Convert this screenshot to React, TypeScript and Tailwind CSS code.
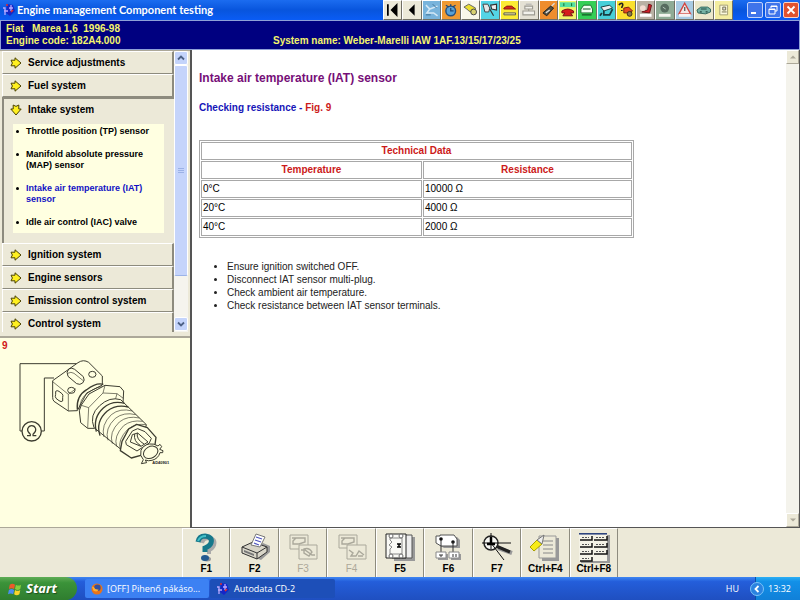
import type { ReactNode } from "react";
import clsx from "clsx";

const Arrow = ({ down = false }: { down?: boolean }) => (
  <svg viewBox="0 0 12 12" className={clsx("size-3 shrink-0", down && "rotate-90")}>
    <path d="M1 3.2H5V0.8L11 6L5 11.2V8.8H1L2.4 6Z" fill="#fff020" stroke="#4a4200" strokeWidth="1" />
  </svg>
);

const AppLogo = () => (
  <svg viewBox="0 0 14 14" className="size-3.5 shrink-0">
    <path d="M5 1L11 2L13 8L8 13L4 10Z" fill="#1526c8" />
    <path d="M1 5H3V12M2 8H6M9 2V8M7 5H11" stroke="#b9a8ff" strokeWidth="1.3" fill="none" />
    <path d="M9 9L11 7M4 2H6" stroke="#e03030" strokeWidth="1.6" />
  </svg>
);

const quickButtons: { label: string; bg: string; icon: ReactNode }[] = [
  { label: "First", bg: "bg-[#ece9d8]", icon: <path d="M4 3V15M13 4L8 9L13 14Z" fill="#000" stroke="#000" strokeWidth="1.8" /> },
  { label: "Previous", bg: "bg-[#ece9d8]", icon: <path d="M12 3V15L6 9Z" fill="#000" /> },
  {
    label: "Tools",
    bg: "bg-[#79b4dc]",
    icon: (
      <>
        <path d="M3 4L7 8L15 5M7 8L4 12H11L15 15" stroke="#d4e8f6" strokeWidth="1.6" fill="none" />
        <path d="M10 3L14 7M3 14H8" stroke="#3d7197" strokeWidth="1" />
      </>
    ),
  },
  {
    label: "Service times",
    bg: "bg-[#f09a32]",
    icon: (
      <>
        <circle cx="9" cy="10" r="5" fill="#59a1d5" stroke="#24507f" strokeWidth="1.5" />
        <path d="M4 4L7 6M14 4L11 6M9 3V5M9 7V10H12" stroke="#1d4777" strokeWidth="1.3" fill="none" />
      </>
    ),
  },
  {
    label: "Timing belts",
    bg: "bg-[#f8f6e8]",
    icon: (
      <>
        <path d="M2 6L7 3L14 7L12 12L7 10L5 8Z" fill="#eadf2f" stroke="#666" />
        <circle cx="12" cy="11" r="3" fill="#d8d070" stroke="#444" />
      </>
    ),
  },
  {
    label: "Diagnostics",
    bg: "bg-[#54d4e6]",
    icon: (
      <>
        <path d="M2 3H7L9 7L8 11H4Z" fill="#e6e6e6" stroke="#444" />
        <path d="M10 4L16 3V9L11 8ZM9 8L13 15" fill="#eee" stroke="#333" strokeWidth="1.2" />
      </>
    ),
  },
  {
    label: "Wheel alignment",
    bg: "bg-[#fcec35]",
    icon: (
      <>
        <path d="M3 7L6 5H11L15 8H3Z" fill="#d62b1d" stroke="#8e1c12" />
        <path d="M3 12H15V14H3Z" fill="#fff8a0" stroke="#555" />
      </>
    ),
  },
  {
    label: "Tyres",
    bg: "bg-[#e4e1d4]",
    icon: (
      <>
        <path d="M5 5H13V8H5ZM3 10H15V14H3ZM9 8V10" fill="#f2f1eb" stroke="#9b9990" strokeWidth="1.1" />
        <path d="M6 3H12" stroke="#aaa" />
      </>
    ),
  },
  {
    label: "Key programming",
    bg: "bg-[#ef8d2d]",
    icon: (
      <>
        <path d="M3 12L11 5L14 7L7 15Z" fill="#545043" stroke="#222" />
        <path d="M12 5L15 2M6 12L10 9" stroke="#ddd" strokeWidth="1.4" />
      </>
    ),
  },
  {
    label: "Service indicator",
    bg: "bg-[#f1f56a]",
    icon: (
      <>
        <path d="M1 1H17V6H1Z" fill="#55e0a0" />
        <path d="M5 5V2M13 5V2" stroke="#136a29" />
        <path d="M3 10Q9 6 15 10V12H12L14 15H4L6 12H3Z" fill="#d61d1d" stroke="#7b1111" />
      </>
    ),
  },
  {
    label: "Air conditioning",
    bg: "bg-[#35cf56]",
    icon: (
      <>
        <path d="M3 8L6 4H13L15 8V12H3Z" fill="#f3fff2" stroke="#1c7030" />
        <path d="M5 8H13M4 14H14" stroke="#145724" strokeWidth="1.2" />
      </>
    ),
  },
  {
    label: "Electrical",
    bg: "bg-[#47cfd8]",
    icon: (
      <>
        <path d="M3 6L12 4L15 7L6 10Z" fill="#efefef" stroke="#173c40" />
        <path d="M6 10V14H12L15 8M4 12L2 15" stroke="#173c40" strokeWidth="1.8" fill="none" />
      </>
    ),
  },
  {
    label: "Fault finding",
    bg: "bg-[#fae02e]",
    icon: (
      <>
        <path d="M2 4Q3 2 5 2Q7 3 5 6V7M5 9V10" stroke="#222" strokeWidth="1.6" fill="none" />
        <path d="M7 7L12 6L16 10L13 12H7Z" fill="#e34b22" stroke="#7c210f" />
        <circle cx="13" cy="13" r="2.5" fill="#8a7752" stroke="#3c3018" />
      </>
    ),
  },
  {
    label: "Airbags",
    bg: "bg-[#b9b1a4]",
    icon: (
      <>
        <path d="M5 11L11 9L12 3L15 4L13 12Z" fill="#cf1f27" stroke="#6d1519" />
        <circle cx="6" cy="7" r="3" fill="#f3dcd2" />
        <path d="M3 13H15V16H3Z" fill="#fff" />
      </>
    ),
  },
  {
    label: "ABS",
    bg: "bg-[#8fab95]",
    icon: (
      <>
        <circle cx="9" cy="7" r="4.5" fill="#566b5e" />
        <path d="M7 6L10 8" stroke="#b7c9bd" />
        <path d="M3 13H15V16H3Z" fill="#f4f4ee" />
      </>
    ),
  },
  {
    label: "Warnings",
    bg: "bg-[#a9cbe3]",
    icon: (
      <>
        <path d="M9 2L15 13H3Z" fill="#f4e8e7" stroke="#d2453f" strokeWidth="1.4" />
        <path d="M9 6V10" stroke="#555" strokeWidth="1.3" />
        <path d="M3 13H15V16H3Z" fill="#f6f3f3" />
      </>
    ),
  },
  {
    label: "Vehicle",
    bg: "bg-[#ece8cb]",
    icon: (
      <>
        <path d="M2 9L6 6H13L16 8V11L11 13L3 12Z" fill="#76b3a6" stroke="#356960" />
        <path d="M6 8H12M5 11H7M11 11H13" stroke="#244b44" strokeWidth="1.2" />
      </>
    ),
  },
  {
    label: "Components",
    bg: "bg-[#f4eda0]",
    icon: (
      <>
        <path d="M5 4H13V14H5Z" fill="#fbf9dd" stroke="#a59f76" />
        <path d="M8 6H11V9H8ZM7 11H12" fill="#ddd" stroke="#77724e" />
      </>
    ),
  },
];

const functionKeys: { label: string; disabled?: boolean; icon: ReactNode }[] = [
  {
    label: "F1",
    icon: (
      <>
        <path d="M11 9Q12 4 18 4Q25 5 23 11Q22 14 18 16V20" fill="none" stroke="#aaa" strokeWidth="4" transform="translate(1 1)" />
        <path d="M8 9Q9 3 15 3Q23 4 21 10Q20 13 15 15V19" fill="none" stroke="#16788b" strokeWidth="5" />
        <path d="M8 8Q10 3 16 3" fill="none" stroke="#43c1c9" strokeWidth="2" />
        <ellipse cx="17" cy="26" rx="4" ry="2.5" fill="#999" />
        <ellipse cx="15" cy="25" rx="4" ry="3" fill="#245a91" />
      </>
    ),
  },
  {
    label: "F2",
    icon: (
      <>
        <path d="M7 21L22 27L31 19V13L24 10Z" fill="#999" />
        <path d="M3 14L14 9L28 14V19L18 26L3 20Z" fill="#d8d5c8" stroke="#333" />
        <path d="M3 14L18 20V26M18 20L28 14" stroke="#333" fill="none" />
        <path d="M5 19L15 23V21L5 17Z" fill="#777" />
        <path d="M12 12L17 1L26 4L21 14Z" fill="#fff" stroke="#777" />
        <path d="M17 4L23 6M16 7L22 9M15 10L20 12" stroke="#4d53be" strokeWidth="1.3" />
      </>
    ),
  },
  {
    label: "F3",
    disabled: true,
    icon: (
      <>
        <path d="M3 2H21V16H3Z" fill="#ece9d8" stroke="#aaa89b" />
        <path d="M6 8L9 5H18V9L12 11H6ZM5 5H9" fill="none" stroke="#aaa89b" strokeWidth="1.4" />
        <path d="M12 12H30V26H12Z" fill="#ece9d8" stroke="#aaa89b" />
        <path d="M14 17H18L25 22H28M17 16Q22 14 25 19L22 23L17 20Z" fill="none" stroke="#aaa89b" strokeWidth="1.4" />
      </>
    ),
  },
  {
    label: "F4",
    disabled: true,
    icon: (
      <>
        <path d="M3 2H21V15H3Z" fill="#ece9d8" stroke="#aaa89b" />
        <path d="M6 8L9 5H18V9L12 11H6ZM5 5H9" fill="none" stroke="#aaa89b" strokeWidth="1.4" />
        <path d="M11 12H30V26H11Z" fill="#ece9d8" stroke="#aaa89b" />
        <path d="M13 17L17 20L15 23H20L23 18L28 22M22 23H27" fill="none" stroke="#aaa89b" strokeWidth="1.4" />
      </>
    ),
  },
  {
    label: "F5",
    icon: (
      <>
        <path d="M10 4H31V28H10Z" fill="#999" />
        <path d="M8 2H28V25H8Z" fill="#eee" stroke="#555" />
        <path d="M2 1H22V25H2Z" fill="#f9f9f5" stroke="#222" />
        <path d="M6 5H18V21H6V16L8 14L5 12L8 9L6 7Z" fill="none" stroke="#888" />
        <circle cx="7" cy="3" r="2" fill="#fff" stroke="#666" />
        <circle cx="17" cy="3" r="2" fill="#fff" stroke="#666" />
        <circle cx="7" cy="23" r="2" fill="#fff" stroke="#666" />
        <circle cx="17" cy="23" r="2" fill="#fff" stroke="#666" />
        <path d="M13 11H17M15 11V14M13 14H17" stroke="#000" strokeWidth="1.5" />
      </>
    ),
  },
  {
    label: "F6",
    icon: (
      <>
        <path d="M7 4H25L28 7V15H12L7 12Z" fill="#999" />
        <path d="M4 3H8V2H22L25 6V13H9L4 10Z" fill="#fff" stroke="#555" />
        <circle cx="9" cy="6" r="1.8" fill="#111" />
        <circle cx="21" cy="9" r="1.8" fill="#111" />
        <path d="M9 7V19M21 9V19" stroke="#333" />
        <path d="M6 21H16V27H6ZM19 21H29V27H19Z" fill="#999" />
        <path d="M4 19H14V25H4ZM17 19H27V25H17Z" fill="#fff" stroke="#888" />
        <path d="M8 21V23H10V21M21 21V24M24 21V24" fill="none" stroke="#333" />
      </>
    ),
  },
  {
    label: "F7",
    icon: (
      <>
        <path d="M17 15L31 20" stroke="#999" strokeWidth="4" />
        <path d="M15 13L29 19" stroke="#222" strokeWidth="3" />
        <circle cx="10" cy="10" r="7" fill="#f8f8f4" stroke="#222" strokeWidth="1.5" />
        <path d="M10 0V16M1 10H30M10 10L23 27" stroke="#111" strokeWidth="1" />
        <path d="M10 4V12M6 11H14" stroke="#000" strokeWidth="2.5" />
      </>
    ),
  },
  {
    label: "Ctrl+F4",
    icon: (
      <>
        <path d="M13 5H30V28H13Z" fill="#999" />
        <path d="M10 3H27V25H10Z" fill="#ece9d8" stroke="#999" />
        <path d="M14 8H24M14 12H24M14 16H24M14 20H24" stroke="#888" />
        <path d="M1 14L8 7L13 11L5 18Z" fill="#f7ec19" stroke="#aaa000" />
        <path d="M8 7L15 2L13 11Z" fill="#eee" stroke="#777" />
      </>
    ),
  },
  {
    label: "Ctrl+F8",
    icon: (
      <>
        <path d="M28 2H32V30H3V28H28Z" fill="#999" />
        <path d="M1 0H29V28H1Z" fill="#f4f2e6" />
        <path d="M1 0.8H29" stroke="#223a78" strokeWidth="1.5" />
        <path d="M2 7H14V3M16 7H29V3M2 14H14V10M16 14H29V10M2 21H14V17M16 21H29V17M2 28H14V24" fill="none" stroke="#111" strokeWidth="1.5" />
        <path d="M4 4.5H11M18 4.5H26M4 11.5H11M18 11.5H26M4 18.5H11M18 18.5H26M4 25.5H11" stroke="#555" strokeDasharray="2 1" />
      </>
    ),
  },
];

const intakeItems = [
  { text: "Throttle position (TP) sensor" },
  { text: "Manifold absolute pressure (MAP) sensor" },
  { text: "Intake air temperature (IAT) sensor", active: true },
  { text: "Idle air control (IAC) valve" },
];

const readings = [
  ["0°C", "10000 Ω"],
  ["20°C", "4000 Ω"],
  ["40°C", "2000 Ω"],
];

const steps = [
  "Ensure ignition switched OFF.",
  "Disconnect IAT sensor multi-plug.",
  "Check ambient air temperature.",
  "Check resistance between IAT sensor terminals.",
];

const TitleBar = () => (
  <header className="flex h-5 shrink-0 items-center bg-linear-to-b from-[#1b6cf0] via-[#0855dd] to-[#0a5cf5] pl-0.5">
    <AppLogo />
    <h1 className="flex-1 truncate pl-px font-['Lato'] text-[11px] font-bold text-white">
      Engine management Component testing
    </h1>
    <div className="mr-3.5 grid h-full w-[350px] shrink-0 grid-cols-18">
      {quickButtons.map((b) => (
        <button
          key={b.label}
          aria-label={b.label}
          className={clsx("border border-t-white border-r-[#716f64] border-b-[#716f64] border-l-white", b.bg)}
        >
          <svg viewBox="0 0 18 18" className="size-full">{b.icon}</svg>
        </button>
      ))}
    </div>
    <div className="flex shrink-0 gap-0.5 pr-px">
      <button aria-label="Minimize" className="size-4 rounded-xs border border-[#c3d3fb] bg-[#3f74ea]">
        <svg viewBox="0 0 14 14"><path d="M3 10H8" stroke="#fff" strokeWidth="2" /></svg>
      </button>
      <button aria-label="Restore" className="size-4 rounded-xs border border-[#c3d3fb] bg-[#3f74ea]">
        <svg viewBox="0 0 14 14" fill="none" stroke="#fff">
          <path d="M5 5V3H11V8H9M5 3.5H11M3 6H9V11H3ZM3 6.5H9" />
        </svg>
      </button>
      <button aria-label="Close" className="size-4 rounded-xs border border-[#f6d3c8] bg-[#e0532f]">
        <svg viewBox="0 0 14 14"><path d="M3.5 3.5L10.5 10.5M10.5 3.5L3.5 10.5" stroke="#fff" strokeWidth="1.8" /></svg>
      </button>
    </div>
  </header>
);

const MenuRow = ({ text }: { text: string }) => (
  <button className="flex h-[23px] w-full shrink-0 items-center gap-1.5 border-t border-r-2 border-b border-l border-t-white border-r-[#8d8b7e] border-b-[#8d8b7e] border-l-white pl-[7px] text-left font-bold">
    <Arrow />
    {text}
  </button>
);

const SideMenu = () => (
  <div className="flex h-[282px] shrink-0 border-t border-[#aca899] bg-[#ece9d8] pr-0.5 pl-0.5">
    <nav className="flex flex-1 flex-col overflow-hidden text-[10px]">
      <MenuRow text="Service adjustments" />
      <MenuRow text="Fuel system" />
      <div className="h-[146px] shrink-0 border-t-2 border-l-2 border-[#8d8b7e]">
        <button className="flex h-[21px] items-center gap-1.5 pl-1.5 font-bold">
          <Arrow down />
          Intake system
        </button>
        <ul className="mt-1 mr-2.5 ml-[9px] flex h-[109px] flex-col gap-3 bg-[#ffffe1] pt-0.5 pr-2 pl-[13px] text-[9px] leading-[11px] font-bold">
          {intakeItems.map((item) => (
            <li key={item.text} className="relative">
              <span className="absolute top-1 -left-2.5 size-[3px] rounded-full bg-black"></span>
              <a href="#" className={clsx("block", item.active && "text-[#1111c4]")}>{item.text}</a>
            </li>
          ))}
        </ul>
      </div>
      <MenuRow text="Ignition system" />
      <MenuRow text="Engine sensors" />
      <MenuRow text="Emission control system" />
      <MenuRow text="Control system" />
    </nav>
    <div className="flex w-3.5 flex-col bg-[#f5f4ee]">
      <button aria-label="Scroll up" className="flex h-3.5 items-center justify-center rounded-xs border border-white bg-[#c4d4fb]">
        <svg viewBox="0 0 8 8" className="size-2"><path d="M1 5.5L4 2.5L7 5.5" fill="none" stroke="#4d6185" strokeWidth="1.8" /></svg>
      </button>
      <div className="flex h-[211px] items-center justify-center rounded-xs border border-white border-b-[#9bb3e8] bg-[#c5d4fb]">
        <svg viewBox="0 0 6 8" className="h-2 w-1.5"><path d="M0 1.5H6M0 3.5H6M0 5.5H6" stroke="#9bb1e6" /></svg>
      </div>
      <button aria-label="Scroll down" className="mt-auto mb-px flex h-3.5 items-center justify-center rounded-xs border border-white bg-[#c4d4fb]">
        <svg viewBox="0 0 8 8" className="size-2"><path d="M1 2.5L4 5.5L7 2.5" fill="none" stroke="#4d6185" strokeWidth="1.8" /></svg>
      </button>
    </div>
  </div>
);

const SensorDrawing = () => (
  <svg viewBox="0 51 570 400" className="block w-full" fill="none" stroke="#3c3c30" strokeWidth="3" strokeLinejoin="round">
    <path d="M230 86H60V288H68M162 129H133V288H124" />
    <circle cx="95" cy="289" r="29" strokeWidth="4" fill="#ffffe1" />
    <path d="M81 302H91V298Q81 290 83 281Q87 272 95 272Q104 272 107 281Q109 290 99 298V302H109" strokeWidth="3.5" />
    {/* plug housing */}
    <path d="M158 137L234 83Q250 72 266 82L307 123V150L260 174L232 227L205 228L162 199Q158 195 158 187Z" fill="#ffffe1" />
    <path d="M158 140L205 178V228M205 178L228 161" strokeWidth="2" />
    <path d="M207 101Q215 97 224 103L250 125Q256 136 248 144Q240 151 230 146L204 124Q197 111 207 101Z" />
    <path d="M203 115Q213 109 222 115L251 138" strokeWidth="2" />
    <ellipse cx="277" cy="118" rx="11" ry="9" />
    <ellipse cx="214" cy="166" rx="11" ry="9" />
    <path d="M167 169Q171 165 177 169L187 177Q190 181 188 187V198Q184 202 177 197L168 190Q164 184 167 178Z" />
    {/* collar and hex nut */}
    <path d="M232 224Q228 183 260 164Q289 142 310 148" strokeWidth="4" />
    <path d="M239 228Q237 190 265 173Q293 152 313 156" strokeWidth="2" />
    <path d="M244 210L267 177L315 151L360 155L371 168L369 206L346 222L320 215L287 251L283 280H263L242 263L238 227Z" fill="#ffffe1" />
    <path d="M244 211L266 218L309 174L351 176L370 190M266 218L263 279M309 174L315 151M351 176L346 194" strokeWidth="2" />
    {/* threaded barrel */}
    <path d="M282 278Q267 240 299 212Q329 184 362 194L439 269L427 318L369 348Z" fill="#ffffe1" />
    <path d="M289 290Q278 248 310 219Q337 195 374 205M300 302Q286 260 321 229Q348 207 385 216" strokeWidth="4" />
    <path d="M312 306Q302 270 334 239Q360 218 397 228M324 316Q313 281 346 250Q372 230 407 239M337 326Q326 292 358 261Q383 241 418 249M350 334Q340 304 371 272Q394 254 428 259M361 343Q352 315 383 283Q407 264 439 269" strokeWidth="2" />
    {/* probe cage */}
    <path d="M366 319L386 282L410 268L442 278L468 307L465 329L433 358L394 369L361 347Z" fill="#ffffe1" strokeWidth="4" />
    <path d="M377 319L397 288L413 281L435 290L454 310L448 324L411 348L379 329Z" />
    <path d="M391 321L397 299L413 294L444 321L423 334ZM404 297Q400 319 422 332M412 294Q408 313 432 327" />
    <path d="M424 386L430 374Q418 362 423 346Q430 330 448 327Q463 325 474 333L480 328L485 335L479 343L489 347L488 353H480Q475 371 456 376Q444 379 436 375L440 383Z" fill="#ffffe1" />
    <ellipse cx="452" cy="352" rx="23" ry="17" transform="rotate(-30 452 352)" />
    <text x="457" y="387" fontSize="12" fontWeight="bold" fill="#222" stroke="none">AD40901</text>
  </svg>
);

const DataTable = () => (
  <table className="w-[435px] table-fixed border-separate border-spacing-px border border-[#a8a8a8] text-[10px] leading-4">
    <colgroup>
      <col className="w-[221px]" />
      <col />
    </colgroup>
    <thead className="text-[#cc1a1a]">
      <tr>
        <th colSpan={2} className="border border-[#a8a8a8]">Technical Data</th>
      </tr>
      <tr>
        <th className="border border-[#a8a8a8]">Temperature</th>
        <th className="border border-[#a8a8a8]">Resistance</th>
      </tr>
    </thead>
    <tbody>
      {readings.map(([temp, res]) => (
        <tr key={temp}>
          <td className="border border-[#a8a8a8] pl-px">{temp}</td>
          <td className="border border-[#a8a8a8] pl-px">{res}</td>
        </tr>
      ))}
    </tbody>
  </table>
);

const ContentPane = () => (
  <main className="flex min-w-0 flex-1 border-r border-b border-l-2 border-[#555] bg-white">
    <article className="flex-1 pt-5 pl-[7px]">
      <h2 className="text-[12px] leading-4 font-bold text-[#760f78]">Intake air temperature (IAT) sensor</h2>
      <h3 className="mt-3.5 mb-6 text-[10px] leading-4 font-bold text-[#1616b8]">
        Checking resistance - <a href="#" className="text-[#cc1a1a]">Fig. 9</a>
      </h3>
      <DataTable />
      <ul className="mt-[22px] list-disc pl-7 text-[10px] leading-[13px] text-[#222]">
        {steps.map((step) => (
          <li key={step}>{step}</li>
        ))}
      </ul>
    </article>
    <div className="flex w-[13px] flex-col justify-between bg-[#f4f3ec]">
      <button aria-label="Scroll up" className="flex h-3.5 items-center justify-center border border-t-white border-r-[#aca899] border-b-[#aca899] border-l-white bg-[#ece9d8]">
        <svg viewBox="0 0 8 8" className="size-2"><path d="M1 5.5H7L4 2.5Z" fill="#aca899" /></svg>
      </button>
      <button aria-label="Scroll down" className="flex h-3.5 items-center justify-center border border-t-white border-r-[#aca899] border-b-[#aca899] border-l-white bg-[#ece9d8]">
        <svg viewBox="0 0 8 8" className="size-2"><path d="M1 2.5H7L4 5.5Z" fill="#aca899" /></svg>
      </button>
    </div>
  </main>
);

const FunctionBar = () => (
  <div className="flex h-[49px] shrink-0 bg-[#ece9d8] pl-[182px]">
    <div className="grid w-[436px] grid-cols-9">
      {functionKeys.map((k) => (
        <button
          key={k.label}
          disabled={k.disabled}
          className="flex flex-col items-center border-t border-r border-l border-t-white border-r-[#8d8b7e] border-l-white pt-1 text-[10px] leading-3 font-bold disabled:font-normal disabled:text-[#aca899]"
        >
          <svg viewBox="0 0 32 30" className="h-[30px] w-8">{k.icon}</svg>
          {k.label}
        </button>
      ))}
    </div>
  </div>
);

const TaskBar = () => (
  <footer className="flex h-[23px] shrink-0 items-stretch bg-linear-to-b from-[#3f86f2] via-[#245edb] via-20% to-[#1f4fc0] font-['Open_Sans'] text-[9px] text-white">
    <button className="mr-2 flex w-[77px] items-center gap-1 rounded-r-xl bg-linear-to-b from-[#5eac56] via-[#3b9339] via-25% to-[#2f7d2f] pl-2">
      <svg viewBox="0 0 16 16" className="size-3.5">
        <path d="M2 3Q5 1 8 3L7 8Q4 6 1 8Z" fill="#ee5a2a" />
        <path d="M9 3Q12 5 15 3L14 8Q11 10 8 8Z" fill="#87cf3c" />
        <path d="M1 9Q4 7 7 9L6 14Q3 12 0 14Z" fill="#4b8df0" />
        <path d="M8 9Q11 11 14 9L13 14Q10 16 7 14Z" fill="#fbd52c" />
      </svg>
      <span className="text-[13px] font-bold italic [text-shadow:1px_1px_1px_#1c4f1c]">Start</span>
    </button>
    <button className="my-0.5 mr-px flex w-[124px] items-center gap-1 rounded-xs bg-[#3c81f3] pl-1.5">
      <svg viewBox="0 0 14 14" className="size-3 shrink-0">
        <circle cx="7" cy="7" r="6.5" fill="#e87319" />
        <circle cx="7.5" cy="5.5" r="3.8" fill="#334f9e" />
        <path d="M1 4Q4 4 5 7L9 8Q7 11 3 9Z" fill="#ffb02e" />
      </svg>
      [OFF] Pihenő pákáso...
    </button>
    <button className="my-0.5 flex w-[125px] items-center gap-1 rounded-xs bg-[#1d4fb8] pl-1.5">
      <AppLogo />
      Autodata CD-2
    </button>
    <span className="ml-auto self-center pr-4">HU</span>
    <div className="flex w-[45px] items-center gap-1 border-l border-[#0b4fa8] bg-linear-to-b from-[#2cb0f5] via-[#1290e8] via-20% to-[#1180d8]">
      <button aria-label="Show hidden icons" className="-ml-1.5 flex size-3.5 items-center justify-center rounded-full border border-[#7cc4f8] bg-[#2a83e0]">
        <svg viewBox="0 0 8 8" className="size-2"><path d="M5.5 1L2.5 4L5.5 7" fill="none" stroke="#fff" strokeWidth="1.8" /></svg>
      </button>
      <time>13:32</time>
    </div>
  </footer>
);

export default function App() {
  return (
    <div className="flex min-h-screen flex-col bg-[#ece9d8] font-['Liberation_Sans',sans-serif] text-black">
      <TitleBar />
      <section className="grid h-[30px] shrink-0 grid-cols-[267px_1fr] items-end border border-[#8fa0d8] bg-[#000080] pb-0.5 pl-[5px] text-[10px] leading-3 font-bold text-[#f4f46c]">
        <p className="whitespace-pre">{"Fiat   Marea 1,6  1996-98\nEngine code: 182A4.000"}</p>
        <p>System name: Weber-Marelli IAW 1AF.13/15/17/23/25</p>
      </section>
      <div className="flex flex-1">
        <aside className="flex w-[190px] shrink-0 flex-col">
          <SideMenu />
          <figure className="mt-1 flex-1 border-t-2 border-b border-[#aca899] bg-[#ffffe1]">
            <figcaption className="pt-0.5 pl-0.5 text-[10px] leading-3 font-bold text-[#d01818]">9</figcaption>
            <SensorDrawing />
          </figure>
        </aside>
        <ContentPane />
      </div>
      <FunctionBar />
      <TaskBar />
    </div>
  );
}
